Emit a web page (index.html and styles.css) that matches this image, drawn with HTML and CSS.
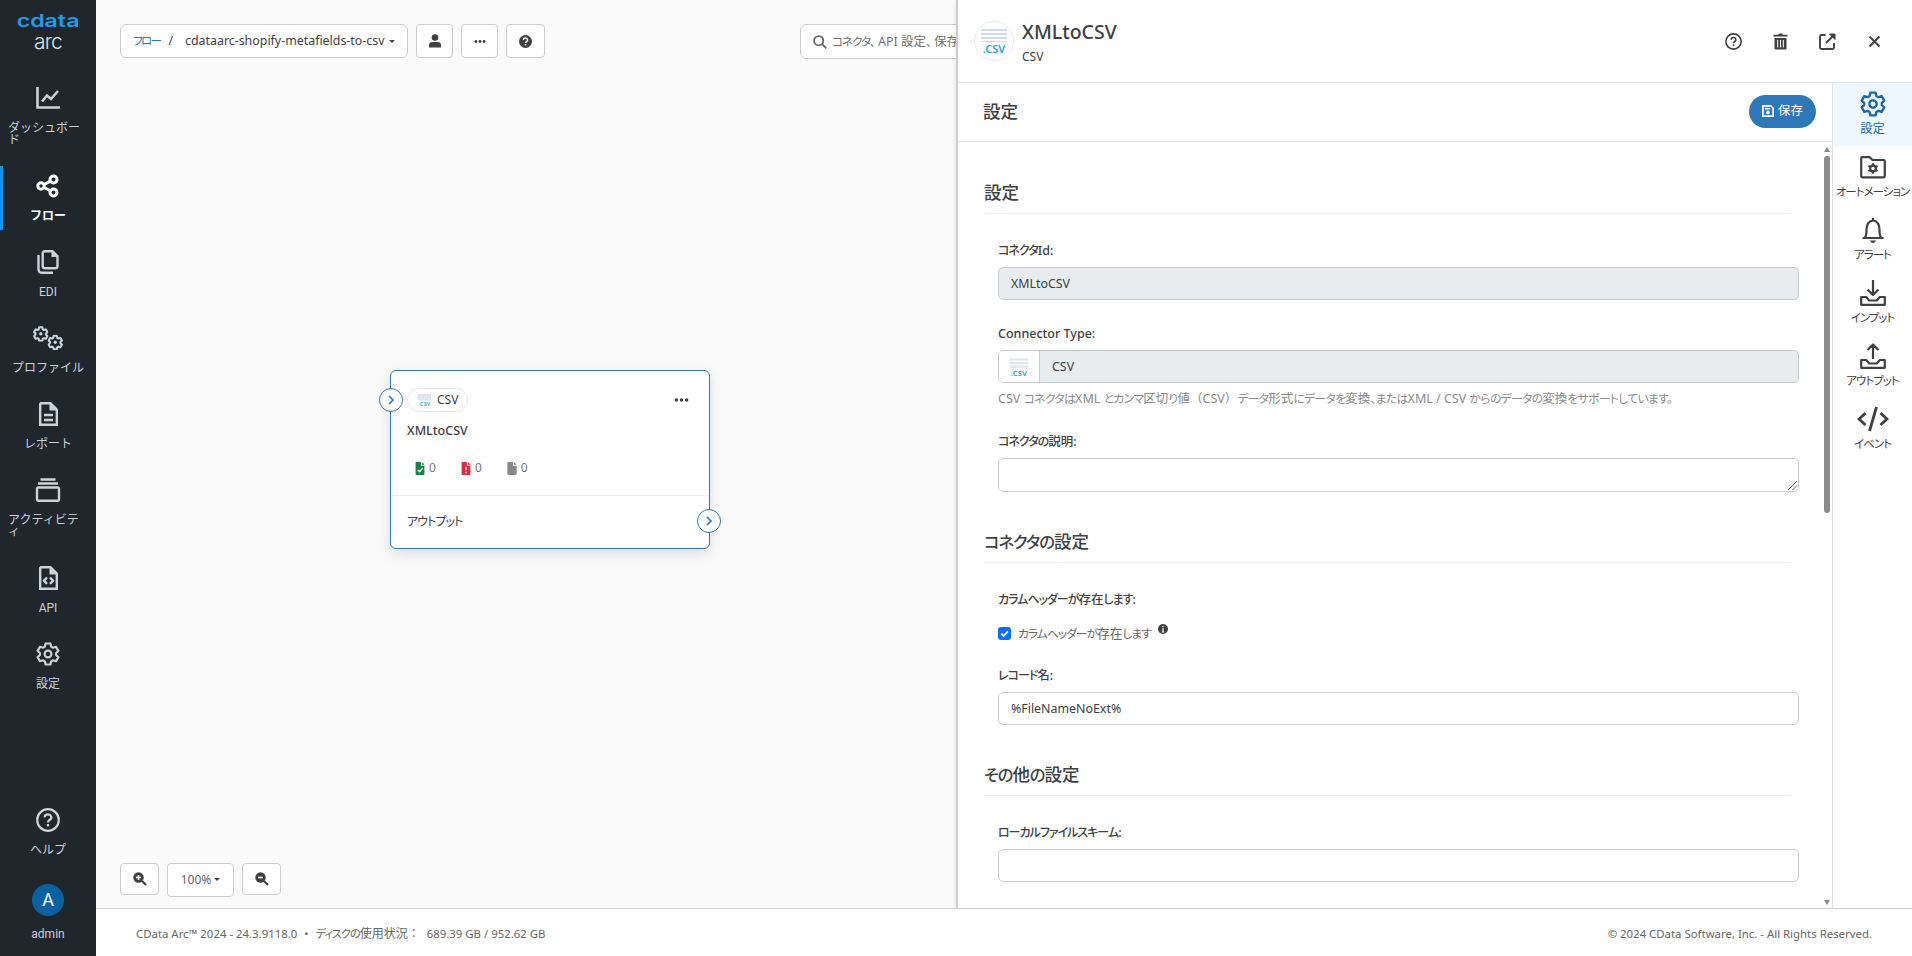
FILE: index.html
```html
<!DOCTYPE html>
<html lang="ja">
<head>
    <meta charset="UTF-8">
    <meta name="viewport" content="width=device-width, initial-scale=1.0">
    <title>CData Arc - フロー</title>
    <link rel="stylesheet" href="styles.css">
</head>
<body>
<!-- Shared icons -->
<svg class="sprite" width="0" height="0">
    <symbol id="gear" viewBox="0 0 24 24">
        <path d="M9.6 1.5h4.8l.7 3.1 1.9 1.1 3-.9 2.4 4.1-2.3 2.1v2l2.3 2.1-2.4 4.1-3-.9-1.9 1.1-.7 3.1H9.6l-.7-3.1-1.9-1.1-3 .9-2.4-4.1L3.9 13v-2L1.6 8.9 4 4.8l3 .9 1.9-1.1z" fill="none" stroke="currentColor" stroke-width="2.2" stroke-linejoin="round"/>
        <circle cx="12" cy="12" r="3.4" fill="none" stroke="currentColor" stroke-width="2.2"/>
    </symbol>
    <symbol id="gear-small" viewBox="0 0 24 24">
        <path d="M9.6 2h4.800l.7 3.100 1.900 1.100 3-.9 2.400 4.100-2.300 2.100v2l2.300 2.100-2.400 4.100-3-.9-1.900 1.100-.7 3.100H9.600l-.7-3.100-1.900-1.100-3 .9-2.400-4.100L3.900 13v-2L1.600 9.400 4 5.300l3 .9 1.900-1.100z" fill="none" stroke="currentColor" stroke-width="3.2" stroke-linejoin="round"/>
        <circle cx="12" cy="12" r="2.6" fill="currentColor"/>
    </symbol>
    <symbol id="help" viewBox="0 0 24 24">
        <circle cx="12" cy="12" r="10.8" fill="none" stroke="currentColor" stroke-width="2.2"/>
        <path d="M8.7 9.4a3.3 3 0 1 1 4.8 2.6q-1.5.8-1.5 2.5" fill="none" stroke="currentColor" stroke-width="2.2"/>
        <rect x="10.8" y="16" width="2.4" height="2.4" fill="currentColor"/>
    </symbol>
    <symbol id="file" viewBox="0 0 10 14">
        <path d="M1 0h5v4h4v9a1 1 0 0 1-1 1H1a1 1 0 0 1-1-1V1a1 1 0 0 1 1-1zM7 0l3 3H7z" fill="currentColor"/>
    </symbol>
    <symbol id="dots" viewBox="0 0 16 4">
        <circle cx="2.5" cy="2" r="1.9"/><circle cx="8" cy="2" r="1.9"/><circle cx="13.5" cy="2" r="1.9"/>
    </symbol>
</svg>

<nav class="sidebar">
    <div class="logo">
        <span class="logo-name">cdata</span>
        <span class="logo-product">arc</span>
    </div>
    <ul class="nav-list">
        <li class="nav-item">
            <svg width="24" height="24" viewBox="0 0 24 24" fill="none" stroke="currentColor" stroke-width="2.6"><path d="M1.5 1v20.5H24"/><path d="M6 15.5l5-6 4 3.5 7-8"/></svg>
            <span>ダッシュボード</span>
        </li>
        <li class="nav-item active">
            <svg width="24" height="24" viewBox="0 0 24 24" fill="none" stroke="currentColor" stroke-width="3"><circle cx="5" cy="12" r="3.2"/><circle cx="17.5" cy="5.5" r="3.5"/><circle cx="17.5" cy="18.5" r="3.5"/><path d="M8 10.5l6.5-3.4M8 13.5l6.5 3.4"/></svg>
            <span>フロー</span>
        </li>
        <li class="nav-item">
            <svg width="24" height="24" viewBox="0 0 24 24" fill="none" stroke="currentColor" stroke-width="2.4"><path d="M9 1.2h7.5l5 5V16q0 2.3-2.3 2.3H9q-2.3 0-2.3-2.3V3.5Q6.7 1.2 9 1.2zM2.5 5v14q0 3.8 3.8 3.8H17"/><path d="M15.5 1v6h6z" fill="currentColor" stroke="none"/></svg>
            <span>EDI</span>
        </li>
        <li class="nav-item">
            <svg width="32" height="24" viewBox="0 0 32 24"><use href="#gear-small" x="1" y="0" width="15.5" height="15.5"/><use href="#gear-small" x="15.5" y="8.5" width="15.5" height="15.5"/></svg>
            <span>プロファイル</span>
        </li>
        <li class="nav-item">
            <svg width="24" height="24" viewBox="0 0 24 24" fill="none" stroke="currentColor" stroke-width="2.4"><path d="M5 1.2h9.5l6.3 6.3v15.3H4.2V2z"/><path d="M13.5 1v7.5H21z" fill="currentColor" stroke="none"/><path d="M8 13h9M8 18h9"/></svg>
            <span>レポート</span>
        </li>
        <li class="nav-item">
            <svg width="26" height="24" viewBox="0 0 26 24" fill="none" stroke="currentColor" stroke-width="2.4"><path d="M5.500 1.500h15M3 5.500h20"/><rect x="2" y="9.5" width="22" height="13.3" rx="1.5"/></svg>
            <span>アクティビティ</span>
        </li>
        <li class="nav-item">
            <svg width="24" height="24" viewBox="0 0 24 24" fill="none" stroke="currentColor" stroke-width="2.4"><path d="M5 1.2h9.5l6.3 6.3v15.3H4.2V2z"/><path d="M13.5 1v7.5H21z" fill="currentColor" stroke="none"/><path d="M11 11.5L8 14.7l3 3.2M14 11.5l3 3.2-3 3.2"/></svg>
            <span>API</span>
        </li>
        <li class="nav-item">
            <svg width="24" height="24"><use href="#gear"/></svg>
            <span>設定</span>
        </li>
    </ul>
    <ul class="nav-list nav-bottom">
        <li class="nav-item">
            <svg width="24" height="24"><use href="#help"/></svg>
            <span>ヘルプ</span>
        </li>
        <li class="nav-item">
            <div class="avatar">A</div>
            <span>admin</span>
        </li>
    </ul>
</nav>

<div class="page">
    <main class="canvas">
        <div class="topbar">
            <div class="breadcrumb">
                <a href="#" class="kana">フロー</a>
                <span class="slash">/</span>
                <span>cdataarc-shopify-metafields-to-csv</span>
                <i class="caret"></i>
            </div>
            <button class="btn-icon">
                <svg width="12" height="14" viewBox="0 0 12 14"><circle cx="6" cy="3.5" r="3.3"/><path d="M0 13.5v-2.2Q0 8 3.5 8h5Q12 8 12 11.3v2.2z"/></svg>
            </button>
            <button class="btn-icon"><svg width="12" height="3"><use href="#dots"/></svg></button>
            <button class="btn-icon wide">
                <svg width="13" height="13" viewBox="0 0 13 13"><circle cx="6.5" cy="6.5" r="6.5"/><path d="M4.4 5a2.1 1.9 0 1 1 3 1.7q-.9.4-.9 1.3" fill="none" stroke="#fff" stroke-width="1.5"/><rect x="5.7" y="8.9" width="1.6" height="1.5" fill="#fff"/></svg>
            </button>
            <div class="search">
                <svg width="14" height="14" viewBox="0 0 14 14" fill="none" stroke="#666" stroke-width="1.8"><circle cx="5.7" cy="5.7" r="4.6"/><path d="M9 9l4.3 4.3"/></svg>
                <span class="search-text"><span class="kana">コネクタ、</span> API 設定<span class="kana">、</span> 保存</span>
            </div>
        </div>

        <!-- Connector on the flow canvas -->
        <div class="node">
            <div class="node-body">
                <div class="node-head">
                    <span class="pill">
                        <svg width="15" height="14" viewBox="0 0 30 28"><path d="M2 2h26v13H2z" fill="#dfe6ee"/><text x="15" y="26" text-anchor="middle" class="csv-mark">.CSV</text></svg>
                        CSV
                    </span>
                    <svg class="node-menu" width="15" height="4"><use href="#dots"/></svg>
                </div>
                <div class="node-title">XMLtoCSV</div>
                <div class="counts">
                    <span class="count ok"><svg width="10" height="13" viewBox="0 0 10 14"><use href="#file"/><path d="M2.5 8.5l2 2 3.3-3.8" fill="none" stroke="#fff" stroke-width="1.4"/></svg><b>0</b></span>
                    <span class="count fail"><svg width="10" height="13" viewBox="0 0 10 14"><use href="#file"/><path d="M5 5v4M5 10.5V12" stroke="#fff" stroke-width="1.5"/></svg><b>0</b></span>
                    <span class="count none"><svg width="10" height="13"><use href="#file"/></svg><b>0</b></span>
                </div>
            </div>
            <div class="node-output"><span class="kana">アウトプット</span></div>
            <span class="port port-in"><svg width="8" height="10" viewBox="0 0 8 10"><path d="M2 1l4 4-4 4"/></svg></span>
            <span class="port port-out"><svg width="8" height="10" viewBox="0 0 8 10"><path d="M2 1l4 4-4 4"/></svg></span>
        </div>

        <div class="zoom-bar">
            <button class="btn-icon">
                <svg width="14" height="14" viewBox="0 0 14 14"><path d="M9 9l4 4" stroke="#404040" stroke-width="2.2"/><circle cx="5.5" cy="5.5" r="5.2"/><path d="M5.5 3v5M3 5.5h5" stroke="#fff" stroke-width="1.6"/></svg>
            </button>
            <button class="zoom-level">100% <i class="caret"></i></button>
            <button class="btn-icon">
                <svg width="14" height="14" viewBox="0 0 14 14"><path d="M9 9l4 4" stroke="#404040" stroke-width="2.2"/><circle cx="5.5" cy="5.5" r="5.2"/><path d="M3 5.5h5" stroke="#fff" stroke-width="1.6"/></svg>
            </button>
        </div>

        <aside class="panel">
            <header class="panel-header">
                <span class="connector-logo">
                    <svg width="30" height="30" viewBox="0 0 30 30"><path d="M2 3h26v2H2zM2 7h26v2H2zM2 11h26v2H2zM2 15h26v1H2z" fill="#d0dbe6"/><text x="15" y="27" text-anchor="middle" class="csv-mark">.CSV</text></svg>
                </span>
                <div class="panel-names">
                    <h1>XMLtoCSV</h1>
                    <p>CSV</p>
                </div>
                <div class="panel-actions">
                    <svg width="17" height="17"><use href="#help"/></svg>
                    <svg width="17" height="17" viewBox="0 0 17 17"><path d="M1.5 1.7H6L7 .5h3l1 1.2h4.5v1.800h-14zM2.5 5h12v10.5q0 1-1 1h-10q-1 0-1-1z"/><path d="M5.7 7v7.5M8.5 7v7.5M11.3 7v7.5" stroke="#fff"/></svg>
                    <svg width="17" height="17" viewBox="0 0 17 17" fill="none" stroke="#404040" stroke-width="1.9"><path d="M6.5 2H2.5Q1 2 1 3.5v11Q1 16 2.5 16h11q1.5 0 1.5-1.5V10M7 10l8-8"/><path d="M10.5 1H16v5.5z" fill="#404040" stroke-width="1"/></svg>
                    <svg width="17" height="17" viewBox="0 0 17 17" stroke="#404040" stroke-width="2"><path d="M3.5 3.5l10 10M13.5 3.5l-10 10"/></svg>
                </div>
            </header>
            <div class="panel-main">
                <section class="panel-content">
                    <div class="toolbar">
                        <h2>設定</h2>
                        <button class="btn-save">
                            <svg width="12" height="12" viewBox="0 0 13 13" fill="none" stroke="#fff" stroke-width="1.8"><path d="M1 1h8.5L12 3.5V12H1z"/><path d="M3 4h6"/><circle cx="6.5" cy="8" r="1.1" fill="#fff"/></svg>
                            保存
                        </button>
                    </div>
                    <div class="form-area">
                        <form class="form">
                            <h3>設定</h3>
                            <div class="field">
                                <label><span class="kana">コネクタ</span>Id:</label>
                                <div class="input disabled">XMLtoCSV</div>
                            </div>
                            <div class="field">
                                <label>Connector Type:</label>
                                <div class="input disabled grouped">
                                    <span class="addon"><svg width="22" height="20" viewBox="0 0 30 28"><path d="M2 2h26v3H2zM2 7h26v3H2zM2 12h26v3H2z" fill="#dde5ed"/><text x="15" y="26" text-anchor="middle" class="csv-mark">.CSV</text></svg></span>
                                    CSV
                                </div>
                                <p class="hint">CSV <span class="kana">コネクタは</span>XML <span class="kana">とカンマ</span>区切<span class="kana">り</span>値（CSV）<span class="kana">データ</span>形式<span class="kana">にデータを</span>変換<span class="kana">、または</span>XML / CSV <span class="kana">からのデータの</span>変換<span class="kana">をサポートしています。</span></p>
                            </div>
                            <div class="field">
                                <label><span class="kana">コネクタの</span>説明:</label>
                                <div class="input textarea"><svg width="9" height="9" viewBox="0 0 9 9" stroke="#666"><path d="M0 9l9-9M4.5 9L9 4.5"/></svg></div>
                            </div>

                            <h3><span class="kana">コネクタの</span>設定</h3>
                            <div class="field">
                                <label><span class="kana">カラムヘッダーが</span>存在<span class="kana">します</span>:</label>
                                <div class="check">
                                    <span class="checkbox"><svg width="13" height="13" viewBox="0 0 13 13"><path d="M3.3 6.7l2.3 2.3 4.3-4.6" fill="none" stroke="#fff" stroke-width="1.8"/></svg></span>
                                    <span><span class="kana">カラムヘッダーが</span>存在<span class="kana">します</span></span>
                                    <svg class="info" width="10" height="10" viewBox="0 0 10 10"><circle cx="5" cy="5" r="5"/><path d="M5 1.8v1.4M5 4.2v4M3.8 8h2.4" stroke="#fff" stroke-width="1.2"/></svg>
                                </div>
                            </div>
                            <div class="field">
                                <label><span class="kana">レコード</span>名:</label>
                                <div class="input">%FileNameNoExt%</div>
                            </div>

                            <h3><span class="kana">その</span>他<span class="kana">の</span>設定</h3>
                            <div class="field">
                                <label><span class="kana">ローカルファイルスキーム</span>:</label>
                                <div class="input"></div>
                            </div>
                        </form>
                        <div class="scrollbar">
                            <i class="arrow-up"></i>
                            <div class="thumb"></div>
                            <i class="arrow-down"></i>
                        </div>
                    </div>
                </section>
                <ul class="tabs">
                    <li class="tab active">
                        <svg width="26" height="26"><use href="#gear"/></svg>
                        <span>設定</span>
                    </li>
                    <li class="tab">
                        <svg width="26" height="26" viewBox="0 0 26 26" fill="none" stroke="currentColor" stroke-width="2.2"><path d="M1.2 22V4.5q0-1.3 1.3-1.3h7L12.5 6h11q1.3 0 1.3 1.3V22q0 1.3-1.3 1.3h-21Q1.2 23.3 1.2 22z"/><circle cx="13" cy="14.5" r="2.9"/><path d="M13 9.3v2M13 17.7v2M8.5 11.9l1.7 1M15.800 16.1l1.7 1M17.5 11.9l-1.7 1M10.2 16.1l-1.7 1"/></svg>
                        <span class="kana">オートメーション</span>
                    </li>
                    <li class="tab">
                        <svg width="26" height="26" viewBox="0 0 26 26" fill="none" stroke="currentColor" stroke-width="2.2"><path d="M2.5 21h21M5 20.5q1.5-2 1.5-7.5 0-8.5 6.5-9.5 6.5 1 6.5 9.5 0 5.5 1.5 7.5M13 1v2.5"/><path d="M10 23.5h6q-1 2.5-3 2.5t-3-2.5z" fill="currentColor" stroke="none"/></svg>
                        <span class="kana">アラート</span>
                    </li>
                    <li class="tab">
                        <svg width="26" height="26" viewBox="0 0 26 26" fill="none" stroke="currentColor" stroke-width="2.2"><path d="M13 0v14.5M7.5 9.5l5.5 5.5 5.5-5.5M1.2 17h5l3 3.5h7.6l3-3.5h5v7.8H1.2z" stroke-linejoin="round"/></svg>
                        <span class="kana">インプット</span>
                    </li>
                    <li class="tab">
                        <svg width="26" height="26" viewBox="0 0 26 26" fill="none" stroke="currentColor" stroke-width="2.2"><path d="M13 16V1.5M7.5 7L13 1.5 18.5 7M1.2 17h5l3 3.5h7.6l3-3.5h5v7.8H1.2z" stroke-linejoin="round"/></svg>
                        <span class="kana">アウトプット</span>
                    </li>
                    <li class="tab">
                        <svg width="32" height="26" viewBox="0 0 32 26" fill="none" stroke="currentColor" stroke-width="2.8"><path d="M8.5 7L2 13l6.5 6M23.5 7l6.5 6-6.5 6M19.5 1l-7 24"/></svg>
                        <span class="kana">イベント</span>
                    </li>
                </ul>
            </div>
        </aside>
    </main>
    <footer class="footer">
        <div class="footer-left">
            <span>CData Arc™ 2024 - 24.3.9118.0</span>
            <span>•</span>
            <span class="disk"><span class="kana">ディスクの</span>使用状況：</span>
            <span>689.39 GB / 952.62 GB</span>
        </div>
        <div>© 2024 CData Software, Inc. - All Rights Reserved.</div>
    </footer>
</div>
</body>
</html>
```

FILE: styles.css
```css
* {
    margin: 0;
    padding: 0;
    box-sizing: border-box;
}
body {
    display: flex;
    height: 956px;
    overflow: hidden;
    background: #fff;
    color: #404040;
    font: 13px/18px "Noto Sans", "Noto Sans CJK JP", sans-serif;
}
ul {
    list-style: none;
}
svg {
    display: block;
    flex: none;
}
.sprite {
    position: absolute;
}
button {
    font: inherit;
    color: inherit;
}
/* Narrow kana */
.kana {
    font-size: 0.93em;
    font-feature-settings: "palt";
    letter-spacing: -1px;
    white-space: nowrap;
}

/* Sidebar */
.sidebar {
    display: flex;
    flex-direction: column;
    flex: none;
    width: 96px;
    background: #1f262c;
    color: #c9d3dc;
    font: 12px/12px Roboto, "Noto Sans CJK JP", sans-serif;
}
.logo {
    display: flex;
    flex-direction: column;
    align-items: center;
    height: 78px;
    padding-top: 12px;
}
.logo-name {
    color: #1e9cf0;
    font: 600 17px/18px Inter, sans-serif;
    transform: scaleX(1.36);
}
.logo-product {
    font: 300 21px/24px Inter, sans-serif;
    letter-spacing: -0.8px;
    color: #dde3e8;
}
.nav-list {
    display: flex;
    flex-direction: column;
    gap: 12px;
}
.nav-bottom {
    margin-top: auto;
    padding-bottom: 8px;
}
.nav-item {
    display: flex;
    flex-direction: column;
    align-items: center;
    gap: 12px;
    padding: 8px;
}
.nav-item.active {
    color: #fff;
    font-weight: 700;
    box-shadow: inset 3px 0 #0f96e6;
}
.avatar {
    width: 32px;
    height: 32px;
    border-radius: 50%;
    background: #08629f;
    color: #fff;
    font-size: 18px;
    line-height: 32px;
    text-align: center;
}

/* Canvas */
.page {
    display: flex;
    flex-direction: column;
    flex: 1;
}
.canvas {
    position: relative;
    display: flex;
    flex-direction: column;
    justify-content: space-between;
    flex: 1;
    padding: 24px 24px 11px;
    background: #fafafa;
}
.topbar {
    display: flex;
    gap: 8px;
}
.breadcrumb {
    display: flex;
    align-items: center;
    width: 288px;
    height: 34px;
    padding: 0 12px;
    border: 1px solid #ccc;
    border-radius: 6px;
    background: #fff;
    font-size: 12.4px;
    white-space: nowrap;
}
.breadcrumb a {
    color: #2b76b5;
    letter-spacing: -1.6px;
    text-decoration: none;
}
.slash {
    margin: 0 12px 0 8px;
}
.caret {
    display: inline-block;
    margin-left: 4px;
    border: 3px solid transparent;
    border-top-color: #404040;
    border-bottom: 0;
    vertical-align: 3px;
}
.btn-icon {
    display: flex;
    align-items: center;
    justify-content: center;
    width: 37px;
    height: 34px;
    border: 1px solid #ccc;
    border-radius: 4px;
    background: #fff;
    fill: #404040;
}
.btn-icon.wide {
    width: 39px;
}
.search {
    display: flex;
    align-items: center;
    gap: 5px;
    width: 400px;
    height: 35px;
    margin-left: 247px;
    padding: 0 12px;
    border: 1px solid #ccc;
    border-radius: 6px;
    background: #fff;
    color: #707070;
    font-size: 12.5px;
}
.search-text {
    white-space: nowrap;
}
.zoom-bar {
    display: flex;
    gap: 8px;
}
.zoom-bar .btn-icon {
    width: 39px;
    height: 32px;
}
.zoom-level {
    width: 67px;
    height: 34px;
    border: 1px solid #ccc;
    border-radius: 4px;
    background: #fff;
    color: #666;
    font-size: 12px;
}
.zoom-level .caret {
    margin-left: 0;
}

/* Flow node */
.node {
    position: absolute;
    left: 294px;
    top: 370px;
    width: 320px;
    height: 179px;
    border: 1.5px solid #2e77b8;
    border-radius: 6px;
    background: #fff;
    box-shadow: 0 5px 14px rgba(0, 0, 40, 0.12);
}
.node-body {
    height: 125px;
    padding: 17px 16px 0;
    border-bottom: 1px solid #eee;
}
.node-head {
    display: flex;
    align-items: center;
    justify-content: space-between;
}
.pill {
    display: flex;
    align-items: center;
    gap: 5px;
    height: 24px;
    padding: 0 9px;
    border: 1px solid #e6e6ea;
    border-radius: 12px;
    font-size: 12px;
}
.node-menu {
    margin-right: 4px;
    fill: #404040;
}
.node-title {
    margin-top: 10px;
    font-size: 12.5px;
    font-weight: 500;
}
.counts {
    display: flex;
    gap: 25px;
    margin: 19px 0 0 8px;
}
.count {
    display: flex;
    align-items: center;
    gap: 4px;
}
.count b {
    color: #777;
    font-size: 12px;
    font-weight: 400;
}
.ok {
    color: #188048;
}
.fail {
    color: #dc2d40;
}
.none {
    color: #888;
}
.node-output {
    padding: 16px;
}
.port {
    position: absolute;
    display: flex;
    align-items: center;
    justify-content: center;
    width: 24px;
    height: 24px;
    border: 1.5px solid #2e77b8;
    border-radius: 50%;
    background: #fff;
    fill: none;
    stroke: #2e77b8;
    stroke-width: 1.7;
}
.port-in {
    left: -12px;
    top: 17px;
}
.port-out {
    right: -12px;
    top: 138px;
}
.csv-mark {
    fill: #2a9fd0;
    font: 600 11px "Noto Sans", sans-serif;
}

/* Settings panel, slides over the canvas */
.panel {
    position: absolute;
    top: 0;
    right: 0;
    bottom: 0;
    display: flex;
    flex-direction: column;
    width: 956px;
    border-left: 2px solid #ccc;
    background: #fff;
    box-shadow: -2px 0 4px rgba(0, 0, 0, 0.06);
}
.panel-header {
    display: flex;
    height: 83px;
    padding: 21px 29px 0 16px;
    border-bottom: 1px solid #dee2e6;
}
.connector-logo {
    display: flex;
    align-items: center;
    justify-content: center;
    width: 40px;
    height: 40px;
    border: 1px solid #e8ebee;
    border-radius: 50%;
}
.panel-names {
    flex: 1;
    margin-left: 8px;
}
.panel-names h1 {
    margin-top: -1px;
    font-size: 19.5px;
    font-weight: 500;
    line-height: 24px;
}
.panel-names p {
    margin-top: 4px;
    font-size: 12px;
}
.panel-actions {
    display: flex;
    gap: 30px;
    padding-top: 12px;
    fill: #404040;
}
.panel-main {
    display: flex;
    flex: 1;
    min-height: 0;
}
.panel-content {
    display: flex;
    flex-direction: column;
    flex: 1;
}
.toolbar {
    display: flex;
    align-items: center;
    justify-content: space-between;
    height: 59px;
    padding: 0 16px 2px 25px;
    border-bottom: 1px solid #dee2e6;
}
.toolbar h2,
.form h3 {
    font-size: 17.5px;
    font-weight: 500;
    line-height: 24px;
}
.btn-save {
    display: flex;
    align-items: center;
    justify-content: center;
    gap: 4px;
    width: 67px;
    height: 33px;
    border: 0;
    border-radius: 17px;
    background: #2e77b8;
    color: #fff;
    font-size: 12.5px;
}
.form-area {
    display: flex;
    flex: 1;
    min-height: 0;
}
.form {
    flex: 1;
    padding: 38px 22px 0 26px;
    overflow: hidden;
}
.form h3 {
    height: 34px;
    margin: 0 8px 28px 0;
    border-bottom: 1px solid #f0f0f0;
}
.field {
    margin: 0 0 25px 14px;
}
.field label {
    display: block;
    margin-bottom: 7px;
    font-size: 12.5px;
    font-weight: 500;
}
.field label .kana {
    font-size: 0.96em;
}
.input {
    height: 33px;
    padding: 0 12px;
    border: 1px solid #c8ccd0;
    border-radius: 5px;
    font-size: 12.4px;
    line-height: 32px;
}
.disabled {
    background: #e9ecef;
}
.grouped {
    display: flex;
    gap: 12px;
    padding: 0;
    overflow: hidden;
}
.addon {
    display: flex;
    align-items: center;
    justify-content: center;
    width: 41px;
    border-right: 1px solid #c8ccd0;
    background: #fff;
}
.hint {
    margin-top: 6px;
    color: #8a8a8a;
    font-size: 12.5px;
    white-space: nowrap;
}
.hint .kana {
    font-size: 0.95em;
    letter-spacing: -0.7px;
}
.textarea {
    display: flex;
    align-items: flex-end;
    justify-content: flex-end;
    height: 34px;
    padding: 1px;
}
.form .field + h3 {
    margin-top: 37px;
}
.check {
    display: flex;
    align-items: center;
    gap: 7px;
    margin-top: 15px;
    color: #666;
    font-size: 12.7px;
}
.checkbox {
    width: 13px;
    height: 13px;
    border-radius: 3px;
    background: #0d6efd;
}
.info {
    margin-top: -8px;
    fill: #404040;
}
.scrollbar {
    display: flex;
    flex-direction: column;
    align-items: center;
    width: 11px;
    padding: 5px 0 3px;
}
.arrow-up,
.arrow-down {
    border: 3px solid transparent;
    border-top: 0;
    border-bottom: 5px solid #888;
}
.arrow-down {
    margin-top: auto;
    border-bottom: 0;
    border-top: 5px solid #888;
}
.thumb {
    width: 6px;
    height: 357px;
    margin-top: 4px;
    border-radius: 3px;
    background: #8b8b8b;
}
.tabs {
    width: 80px;
    border-left: 1px solid #dee2e6;
}
.tab {
    display: flex;
    flex-direction: column;
    align-items: center;
    gap: 3px;
    height: 63px;
    padding-top: 8px;
    font-size: 12.3px;
}
.tab .kana {
    font-size: 11.5px;
}
.tab.active {
    background: #edf7fd;
    color: #1f67a8;
}

.footer {
    display: flex;
    justify-content: space-between;
    height: 48px;
    padding: 16px 40px 0;
    border-top: 1px solid #d5d5d5;
    color: #666;
    font-size: 11.4px;
}
.footer-left {
    display: flex;
    gap: 7px;
}
.disk {
    font-size: 12px;
}
```
